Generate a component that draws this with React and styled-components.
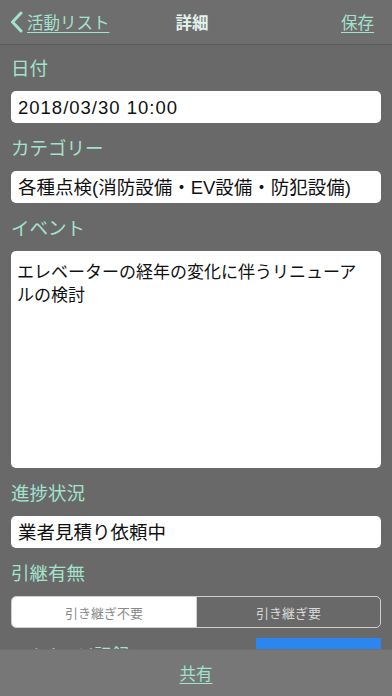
import React from "react";
import styled, { createGlobalStyle } from "styled-components";

const Global = createGlobalStyle`
  html, body { margin: 0; padding: 0; background: #696969; }
  body { font-family: "Noto Sans CJK JP", "Noto Sans", sans-serif; }
  * { box-sizing: border-box; }
`;

const TEAL = "#a3e2cd";

const Screen = styled.div`
  width: 392px;
  height: 696px;
  display: flex;
  flex-direction: column;
  background: #696969;
  overflow: hidden;
`;

const NavBar = styled.header`
  height: 45px;
  flex: none;
  display: grid;
  grid-template-columns: 1fr auto 1fr;
  align-items: center;
  padding: 0 18px 0 10px;
  background: #6e6e6e;
  border-bottom: 1px solid #5b5b5b;
`;

const BackLink = styled.a`
  display: flex;
  align-items: center;
  gap: 4px;
  color: ${TEAL};
  font-size: 16.5px;
  text-decoration: underline;
  text-underline-offset: 3px;
  text-decoration-thickness: 1px;
  justify-self: start;
`;

const Title = styled.h1`
  margin: 0;
  font-size: 16.5px;
  font-weight: 700;
  color: #e2f2ec;
`;

const NavAction = styled.a`
  justify-self: end;
  color: ${TEAL};
  font-size: 16.5px;
  text-decoration: underline;
  text-underline-offset: 3px;
  text-decoration-thickness: 1px;
`;

const Content = styled.main`
  flex: 1;
  min-height: 0;
  overflow: hidden;
  display: flex;
  flex-direction: column;
  gap: 12px;
  padding: 10px 11px 0;
`;

const Label = styled.div`
  color: ${TEAL};
  font-size: 18.5px;
  line-height: 24px;
  height: 24px;
  white-space: nowrap;
`;

const Field = styled.div`
  background: #fff;
  border-radius: 5px;
  height: ${(p) => p.$h || 32}px;
  flex: none;
  padding: ${(p) => (p.$multi ? "10px 8px 0 6px" : "0 7px")};
  display: ${(p) => (p.$multi ? "block" : "flex")};
  align-items: center;
  color: #111;
  font-family: "Liberation Sans", "Noto Sans CJK JP", sans-serif;
  font-size: ${(p) => (p.$multi ? 17 : 18.5)}px;
  letter-spacing: ${(p) => (p.$wide ? "1px" : "0")};
  line-height: 23px;
  white-space: ${(p) => (p.$multi ? "normal" : "nowrap")};
  overflow: hidden;
`;

const Segmented = styled.div`
  display: grid;
  grid-template-columns: 1fr 1fr;
  height: 32px;
  flex: none;
  border: 1px solid #cfcfcf;
  border-radius: 5px;
  overflow: hidden;
`;

const Segment = styled.div`
  display: flex;
  align-items: center;
  justify-content: center;
  font-size: 13px;
  background: ${(p) => (p.$active ? "#ffffff" : "transparent")};
  color: ${(p) => (p.$active ? "#8a8a8a" : "#d8d8d8")};
  border-left: ${(p) => (p.$first ? "none" : "1px solid #cfcfcf")};
`;

const ImageRow = styled.div`
  display: flex;
  align-items: flex-start;
  justify-content: space-between;
  flex: none;
  margin-top: -2px;
`;

const ImageLabel = styled.div`
  color: ${TEAL};
  font-size: 18px;
  line-height: 24px;
  padding: 4px 0 0 11px;
`;

const BlueButton = styled.div`
  width: 125px;
  height: 34px;
  background: #2b86f2;
  color: #fff;
  font-size: 15px;
  display: flex;
  align-items: center;
  justify-content: center;
`;

const Toolbar = styled.footer`
  height: 47px;
  flex: none;
  display: flex;
  align-items: center;
  justify-content: center;
  background: #777777;
  border-top: 1px solid #707070;
`;

const ToolbarLink = styled.a`
  color: ${TEAL};
  font-size: 16.5px;
  text-decoration: underline;
  text-underline-offset: 3px;
  text-decoration-thickness: 1px;
`;

const Chevron = () => (
  <svg width="13" height="22" viewBox="0 0 13 22">
    <path d="M11 2 L2.5 11 L11 20" fill="none" stroke={TEAL} strokeWidth="3" strokeLinecap="round" strokeLinejoin="round" />
  </svg>
);

export default function App() {
  return (
    <>
      <Global />
      <Screen>
        <NavBar>
          <BackLink>
            <Chevron />
            活動リスト
          </BackLink>
          <Title>詳細</Title>
          <NavAction>保存</NavAction>
        </NavBar>
        <Content>
          <Label>日付</Label>
          <Field $wide>2018/03/30 10:00</Field>
          <Label>カテゴリー</Label>
          <Field>各種点検(消防設備・EV設備・防犯設備)</Field>
          <Label>イベント</Label>
          <Field $multi $h={217}>
            エレベーターの経年の変化に伴うリニューアルの検討
          </Field>
          <Label>進捗状況</Label>
          <Field>業者見積り依頼中</Field>
          <Label>引継有無</Label>
          <Segmented>
            <Segment $active $first>引き継ぎ不要</Segment>
            <Segment>引き継ぎ要</Segment>
          </Segmented>
          <ImageRow>
            <ImageLabel>イメージ記録</ImageLabel>
            <BlueButton>イメージ選択</BlueButton>
          </ImageRow>
        </Content>
        <Toolbar>
          <ToolbarLink>共有</ToolbarLink>
        </Toolbar>
      </Screen>
    </>
  );
}
